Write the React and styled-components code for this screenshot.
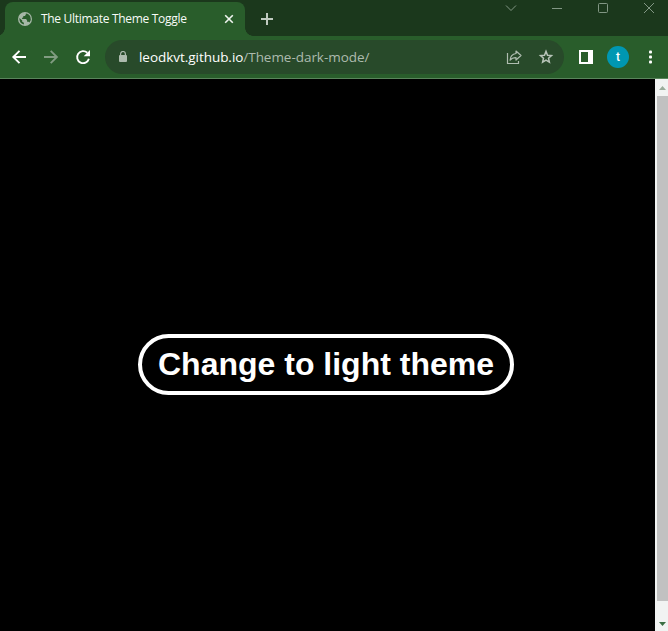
import React from 'react';
import styled, { createGlobalStyle } from 'styled-components';

const GlobalStyle = createGlobalStyle`
  *, *::before, *::after { box-sizing: border-box; }
  html, body { margin: 0; padding: 0; overflow: hidden; background: #000; }
  svg { display: block; flex: none; }
  button { font: inherit; border: 0; padding: 0; background: none; color: inherit; }
`;

const Window = styled.div`
  display: flex;
  flex-direction: column;
  width: 100vw;
  height: 100vh;
  font-family: 'Open Sans', 'Noto Sans', sans-serif;
`;

const TitleBar = styled.header`
  display: flex;
  align-items: flex-end;
  height: 36px;
  flex: none;
  background: #1b381c;
`;

const Tab = styled.div`
  position: relative;
  display: flex;
  align-items: center;
  width: 240px;
  height: 34px;
  margin-left: 5px;
  padding: 0 11px 0 13px;
  border-radius: 8px 8px 0 0;
  background: #295d2b;
  color: #f7fbf7;

  &::before, &::after {
    content: '';
    position: absolute;
    bottom: 0;
    width: 8px;
    height: 8px;
  }
  &::before {
    left: -8px;
    background: radial-gradient(circle at 0 0, transparent 7.5px, #295d2b 8px);
  }
  &::after {
    right: -8px;
    background: radial-gradient(circle at 100% 0, transparent 7.5px, #295d2b 8px);
  }
`;

const TabTitle = styled.span`
  flex: 1;
  margin-left: 9px;
  font-size: 12px;
  line-height: 16px;
  letter-spacing: -0.3px;
  white-space: nowrap;
`;

const NewTab = styled.button`
  display: grid;
  place-items: center;
  width: 28px;
  height: 34px;
  margin-left: 8px;
`;

const WindowControls = styled.div`
  display: flex;
  align-self: flex-start;
  margin-left: auto;
`;

const WindowButton = styled.button`
  display: grid;
  place-items: center;
  width: ${(p) => (p.$last ? 42 : 46)}px;
  height: 16px;
  && {
    padding-left: ${(p) => (p.$last ? 4 : 0)}px;
  }
`;

const Toolbar = styled.nav`
  display: flex;
  align-items: center;
  height: 43px;
  flex: none;
  padding: 0 10px 0 11px;
  border-bottom: 1px solid #59855b;
  background: #295d2b;
`;

const ToolButton = styled.button`
  display: grid;
  place-items: center;
  width: 16px;
  height: 16px;
  margin-right: ${(p) => p.$gap || 0}px;
`;

const AddressBar = styled.div`
  display: flex;
  align-items: center;
  width: 459px;
  height: 34px;
  margin-right: 14px;
  padding: 0 10px 0 13px;
  border-radius: 17px;
  background: #284a2a;
`;

const Url = styled.span`
  flex: 1;
  margin-left: 11px;
  font-size: 13.5px;
  line-height: 20px;
  letter-spacing: -0.04px;
  white-space: nowrap;
  color: #adbbae;
`;

const Host = styled.span`
  color: #fff;
`;

const Avatar = styled.div`
  display: grid;
  place-items: center;
  width: 22px;
  height: 22px;
  margin-right: 13px;
  border-radius: 50%;
  background: #0097b2;
  color: #fff;
  font: 500 12px/22px Roboto, sans-serif;
`;

const Viewport = styled.div`
  display: flex;
  flex: 1;
  min-height: 0;
`;

const Page = styled.main`
  display: flex;
  flex: 1;
  align-items: center;
  justify-content: center;
  padding: 19px 3px 0 0;
  background: #000;
`;

const ThemeToggle = styled.button`
  && {
    width: 376px;
    height: 61px;
    border: 4px solid #fff;
    border-radius: 31px;
    color: #fff;
    font: bold 32px/37px 'Liberation Sans', Arial, sans-serif;
    white-space: nowrap;
  }
`;

const Scrollbar = styled.aside`
  display: flex;
  flex-direction: column;
  width: 13px;
  padding-left: 2px;
  background: #f1f3f2;
`;

const ScrollArrow = styled.div`
  display: flex;
  justify-content: center;
  height: 17px;
  padding-top: ${(p) => p.$top}px;
`;

const Thumb = styled.div`
  height: 505px;
  background: #c1c1c1;
`;

const Track = styled.div`
  flex: 1;
`;

const Globe = () => (
  <svg width="14" height="14" viewBox="0 0 14 14">
    <circle cx="7" cy="7" r="7" fill="#a6b7a7" />
    <path d="M1.400 6 4.200 8.600v1.200l1.700 1v1.700C3.300 12 1.400 10 1.400 7zM7.800 1.400v1.400L6.900 4H5.300v1.300l-1.200.7v1h4l1 1.500v1.300h1.500l.900.800A5.600 5.600 0 0 0 7.800 1.400z" fill="#295d2b" />
  </svg>
);

const Close = () => (
  <svg width="10" height="10" viewBox="0 0 10 10" stroke="#f0f5f0" strokeWidth="1.6">
    <path d="m1.2 1.2 7.6 7.6m0-7.6-7.6 7.6" />
  </svg>
);

const Plus = () => (
  <svg width="12" height="12" viewBox="0 0 12 12" fill="#c0cac0">
    <path d="M5 0h2v5h5v2H7v5H5V7H0V5h5z" />
  </svg>
);

const Arrow = ({ forward }) => (
  <svg width="16" height="16" viewBox="0 0 16 16" fill="none" stroke={forward ? '#819c82' : '#fff'} strokeWidth="1.9">
    <path d={forward ? 'M1 8h12.5M7.7 1.8 13.900 8l-6.200 6.200' : 'M15 8H2.500M8.500 1.800 2.300 8l6.200 6.200'} />
  </svg>
);

const Reload = () => (
  <svg width="16" height="16" viewBox="0 0 16 16">
    <path d="M13.900 9.800A6 6 0 1 1 12.300 3.800" fill="none" stroke="#fff" strokeWidth="1.900" />
    <path d="M15 1v6.300H8.700z" fill="#fff" />
  </svg>
);

const Lock = () => (
  <svg width="10" height="12" viewBox="0 0 10 12">
    <path d="M2.600 5V2.900a2.400 2.400 0 0 1 4.800 0V5" fill="none" stroke="#adbbae" strokeWidth="1.200" />
    <rect x="1" y="4" width="8" height="7" rx="1" fill="#adbbae" />
  </svg>
);

const Share = () => (
  <svg width="16" height="16" viewBox="0 0 16 16" fill="none" stroke="#afbdb0" strokeWidth="1.200">
    <path d="M1.500 4v10.500h11V12" />
    <path d="M10 2 15 6.500l-5 4.500V8.600C7.500 8.600 5.500 9.300 4.100 11.200c.200-3.500 2.200-6.200 5.900-6.700z" strokeLinejoin="round" />
  </svg>
);

const Star = () => (
  <svg width="16" height="16" viewBox="0 0 16 16" fill="none" stroke="#b7c4b8" strokeWidth="1.500">
    <path d="m8 2.400 1.500 3.800 4 .3-3 2.700.9 4L8 11.100l-3.400 2.100.9-4-3-2.700 4-.3z" />
  </svg>
);

const SidePanel = () => (
  <svg width="14" height="14" viewBox="0 0 14 14">
    <path fillRule="evenodd" d="M0 0h14v14H0zM2 2v10h7V2z" fill="#fff" />
  </svg>
);

const Menu = () => (
  <svg width="4" height="14" viewBox="0 0 4 14" fill="#fff">
    <rect x="1" y=".5" width="3" height="3" rx="1" />
    <rect x="1" y="5.500" width="3" height="3" rx="1" />
    <rect x="1" y="10.500" width="3" height="3" rx="1" />
  </svg>
);

const controlPaths = {
  search: 'M1 3.500 6 8.500l5-5',
  minimize: 'M1 6.500h10',
  maximize: 'M2.500 1.500h7a1 1 0 0 1 1 1v7a1 1 0 0 1-1 1h-7a1 1 0 0 1-1-1v-7a1 1 0 0 1 1-1z',
  close: 'm1 1 10 10m0-10-10 10',
};

const Control = ({ name, last }) => (
  <WindowButton $last={last} aria-label={name}>
    <svg width="12" height="12" viewBox="0 0 12 12" fill="none" stroke="#829784" strokeWidth="1">
      <path d={controlPaths[name]} />
    </svg>
  </WindowButton>
);

export default function App() {
  return (
    <>
      <GlobalStyle />
      <Window>
        <TitleBar>
          <Tab>
            <Globe />
            <TabTitle>The Ultimate Theme Toggle</TabTitle>
            <Close />
          </Tab>
          <NewTab aria-label="New tab"><Plus /></NewTab>
          <WindowControls>
            <Control name="search" />
            <Control name="minimize" />
            <Control name="maximize" />
            <Control name="close" last />
          </WindowControls>
        </TitleBar>
        <Toolbar>
          <ToolButton $gap={16} aria-label="Back"><Arrow /></ToolButton>
          <ToolButton $gap={16} aria-label="Forward"><Arrow forward /></ToolButton>
          <ToolButton $gap={14} aria-label="Reload"><Reload /></ToolButton>
          <AddressBar>
            <Lock />
            <Url><Host>leodkvt.github.io</Host>/Theme-dark-mode/</Url>
            <ToolButton $gap={16} aria-label="Share"><Share /></ToolButton>
            <ToolButton aria-label="Bookmark"><Star /></ToolButton>
          </AddressBar>
          <ToolButton $gap={13} aria-label="Side panel"><SidePanel /></ToolButton>
          <Avatar>t</Avatar>
          <ToolButton aria-label="Menu"><Menu /></ToolButton>
        </Toolbar>
        <Viewport>
          <Page>
            <ThemeToggle>Change to light theme</ThemeToggle>
          </Page>
          <Scrollbar>
            <ScrollArrow $top={7}>
              <svg width="7" height="4" viewBox="0 0 7 4"><path d="M3.500 0 7 4H0z" fill="#9aac9b" /></svg>
            </ScrollArrow>
            <Thumb />
            <Track />
            <ScrollArrow $top={8}>
              <svg width="7" height="4" viewBox="0 0 7 4"><path d="M0 0h7L3.500 4z" fill="#3a6e43" /></svg>
            </ScrollArrow>
          </Scrollbar>
        </Viewport>
      </Window>
    </>
  );
}
